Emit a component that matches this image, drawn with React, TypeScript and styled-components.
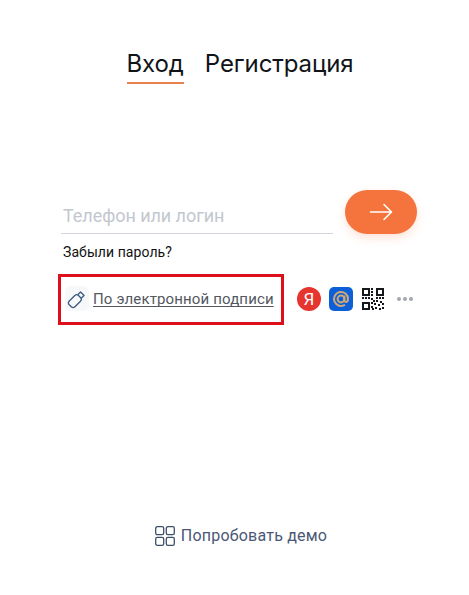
import React from "react";
import styled, { createGlobalStyle } from "styled-components";

const GlobalStyle = createGlobalStyle`
  html, body {
    margin: 0;
    padding: 0;
    background: #fff;
  }
  body {
    font-family: Roboto, "Liberation Sans", sans-serif;
  }
`;

const Page = styled.div`
  width: 469px;
  height: 595px;
  display: flex;
  flex-direction: column;
  overflow: hidden;
`;

const Tabs = styled.div`
  display: flex;
  justify-content: center;
  gap: 21px;
  margin-top: 48px;
  padding-left: 11px;
`;

const Tab = styled.div<{ $active?: boolean }>`
  font-family: Inter, sans-serif;
  font-size: 24px;
  letter-spacing: -0.1px;
  line-height: 31px;
  color: #101418;
  padding-bottom: 3px;
  border-bottom: 2px solid ${(p) => (p.$active ? "#e8804f" : "transparent")};
`;

const LoginRow = styled.div`
  display: flex;
  align-items: flex-end;
  gap: 12px;
  margin: 106px 0 0 61px;
`;

const Field = styled.div`
  width: 272px;
  height: 36px;
  box-sizing: border-box;
  border-bottom: 1px solid #d3d6dc;
  padding-left: 2px;
  display: flex;
  align-items: center;
  font-size: 18px;
  letter-spacing: -0.05px;
  color: #c3c7cf;
`;

const Submit = styled.div`
  width: 72px;
  height: 44px;
  border-radius: 22px;
  background: #f5743d;
  box-shadow: 0 4px 10px rgba(245, 116, 61, 0.2);
  display: flex;
  align-items: center;
  justify-content: center;
`;

const Forgot = styled.div`
  margin: 9px 0 0 63px;
  font-size: 14px;
  letter-spacing: 0.07px;
  line-height: 18px;
  color: #111;
`;

const MethodsRow = styled.div`
  display: flex;
  align-items: center;
  margin: 13px 0 0 58px;
`;

const Highlight = styled.div`
  width: 226px;
  height: 51px;
  box-sizing: border-box;
  border: 3px solid #dc0f1a;
  display: flex;
  align-items: center;
  gap: 4px;
  padding: 0 0 2px 4px;
`;

const KeyTile = styled.div`
  width: 24px;
  height: 25px;
  border-radius: 6px;
  background: #f7f8fa;
  display: flex;
  align-items: center;
  justify-content: center;
`;

const SignLink = styled.span`
  font-size: 15px;
  letter-spacing: 0.14px;
  line-height: 18px;
  color: #54585f;
  text-decoration: underline;
  text-decoration-skip-ink: none;
  text-underline-offset: 2px;
  white-space: nowrap;
`;

const Providers = styled.div`
  display: flex;
  align-items: center;
  margin-left: 13px;
  padding-bottom: 2px;
`;

const Yandex = styled.div`
  width: 24px;
  height: 24px;
  border-radius: 50%;
  background: #e5352e;
  color: #fff;
  font-size: 17px;
  font-weight: 400;
  display: flex;
  align-items: center;
  justify-content: center;
`;

const MailTile = styled.div`
  width: 24px;
  height: 24px;
  margin-left: 8px;
  border-radius: 5px;
  background: #0c5fd6;
  display: flex;
  align-items: center;
  justify-content: center;
`;

const QrBox = styled.div`
  margin-left: 9px;
  display: flex;
`;

const Dots = styled.div`
  margin-left: 13px;
  display: flex;
  gap: 2px;
`;

const Dot = styled.span`
  width: 4px;
  height: 4px;
  border-radius: 50%;
  background: #a3a7b0;
`;

const Demo = styled.div`
  margin-top: 200px;
  display: flex;
  justify-content: center;
  align-items: center;
  gap: 6px;
  padding-left: 13px;
  font-size: 16px;
  letter-spacing: 0.2px;
  line-height: 22px;
  color: #4a5876;
`;

// lower right corner of the code, the finder squares are drawn apart
const qrNoise: [number, number][] = [
  [9, 0], [9, 3], [9, 6], [0, 9], [3, 9], [6, 9],
  [14, 9], [17, 9], [20, 9], [9, 10],
  [11, 12], [14, 12], [18, 13], [9, 14],
  [12, 15], [16, 16], [20, 15], [9, 18],
  [13, 19], [17, 20], [20, 19], [10, 20],
];

const QrIcon = () => (
  <svg width="22" height="22" viewBox="0 0 22 22" shapeRendering="crispEdges" fill="#16181c">
    {[[0, 0], [14, 0], [0, 14]].map(([x, y]) => (
      <rect key={`${x}-${y}`} x={x + 1} y={y + 1} width="6" height="6" fill="none" stroke="#16181c" strokeWidth="2" />
    ))}
    {qrNoise.map(([x, y]) => (
      <rect key={`${x}-${y}`} x={x} y={y} width="2" height="2" />
    ))}
  </svg>
);

const App = () => {
  return (
    <Page>
      <GlobalStyle />
      <Tabs>
        <Tab $active>Вход</Tab>
        <Tab>Регистрация</Tab>
      </Tabs>
      <LoginRow>
        <Field>Телефон или логин</Field>
        <Submit>
          <svg width="24" height="18" viewBox="0 0 24 18" fill="none" stroke="#fff" strokeWidth="1.6" strokeLinecap="round" strokeLinejoin="round">
            <path d="M1.5 9h21M15 1.5 22.5 9 15 16.5" />
          </svg>
        </Submit>
      </LoginRow>
      <Forgot>Забыли пароль?</Forgot>
      <MethodsRow>
        <Highlight>
          <KeyTile>
            <svg width="20" height="20" viewBox="0 0 20 20" fill="none" stroke="#3d5a80" strokeWidth="1.3" strokeLinejoin="round">
              <g transform="rotate(45 10 10)">
                <rect x="6" y="6.5" width="8" height="13" rx="2.6" />
                <path d="M7.5 6.5V2.5h5v4" />
              </g>
            </svg>
          </KeyTile>
          <SignLink>По электронной подписи</SignLink>
        </Highlight>
        <Providers>
          <Yandex>Я</Yandex>
          <MailTile>
            <svg width="20" height="20" viewBox="0 0 20 20" fill="none" stroke="#cfa877" strokeWidth="2">
              <circle cx="10" cy="10" r="3.4" />
              <path d="M13.4 6.6v4.6c0 2.6 3.6 2.4 3.6-1.2a7 7 0 1 0-3 5.7" />
            </svg>
          </MailTile>
          <QrBox>
            <QrIcon />
          </QrBox>
          <Dots>
            <Dot />
            <Dot />
            <Dot />
          </Dots>
        </Providers>
      </MethodsRow>
      <Demo>
        <svg width="20" height="20" viewBox="0 0 20 20" fill="none" stroke="#3a5068" strokeWidth="1.3">
          <rect x="0.7" y="0.7" width="8" height="8" rx="1.6" />
          <rect x="11.3" y="0.7" width="8" height="8" rx="1.6" />
          <rect x="0.7" y="11.3" width="8" height="8" rx="1.6" />
          <rect x="11.3" y="11.3" width="8" height="8" rx="1.6" />
        </svg>
        Попробовать демо
      </Demo>
    </Page>
  );
};

export default App;
